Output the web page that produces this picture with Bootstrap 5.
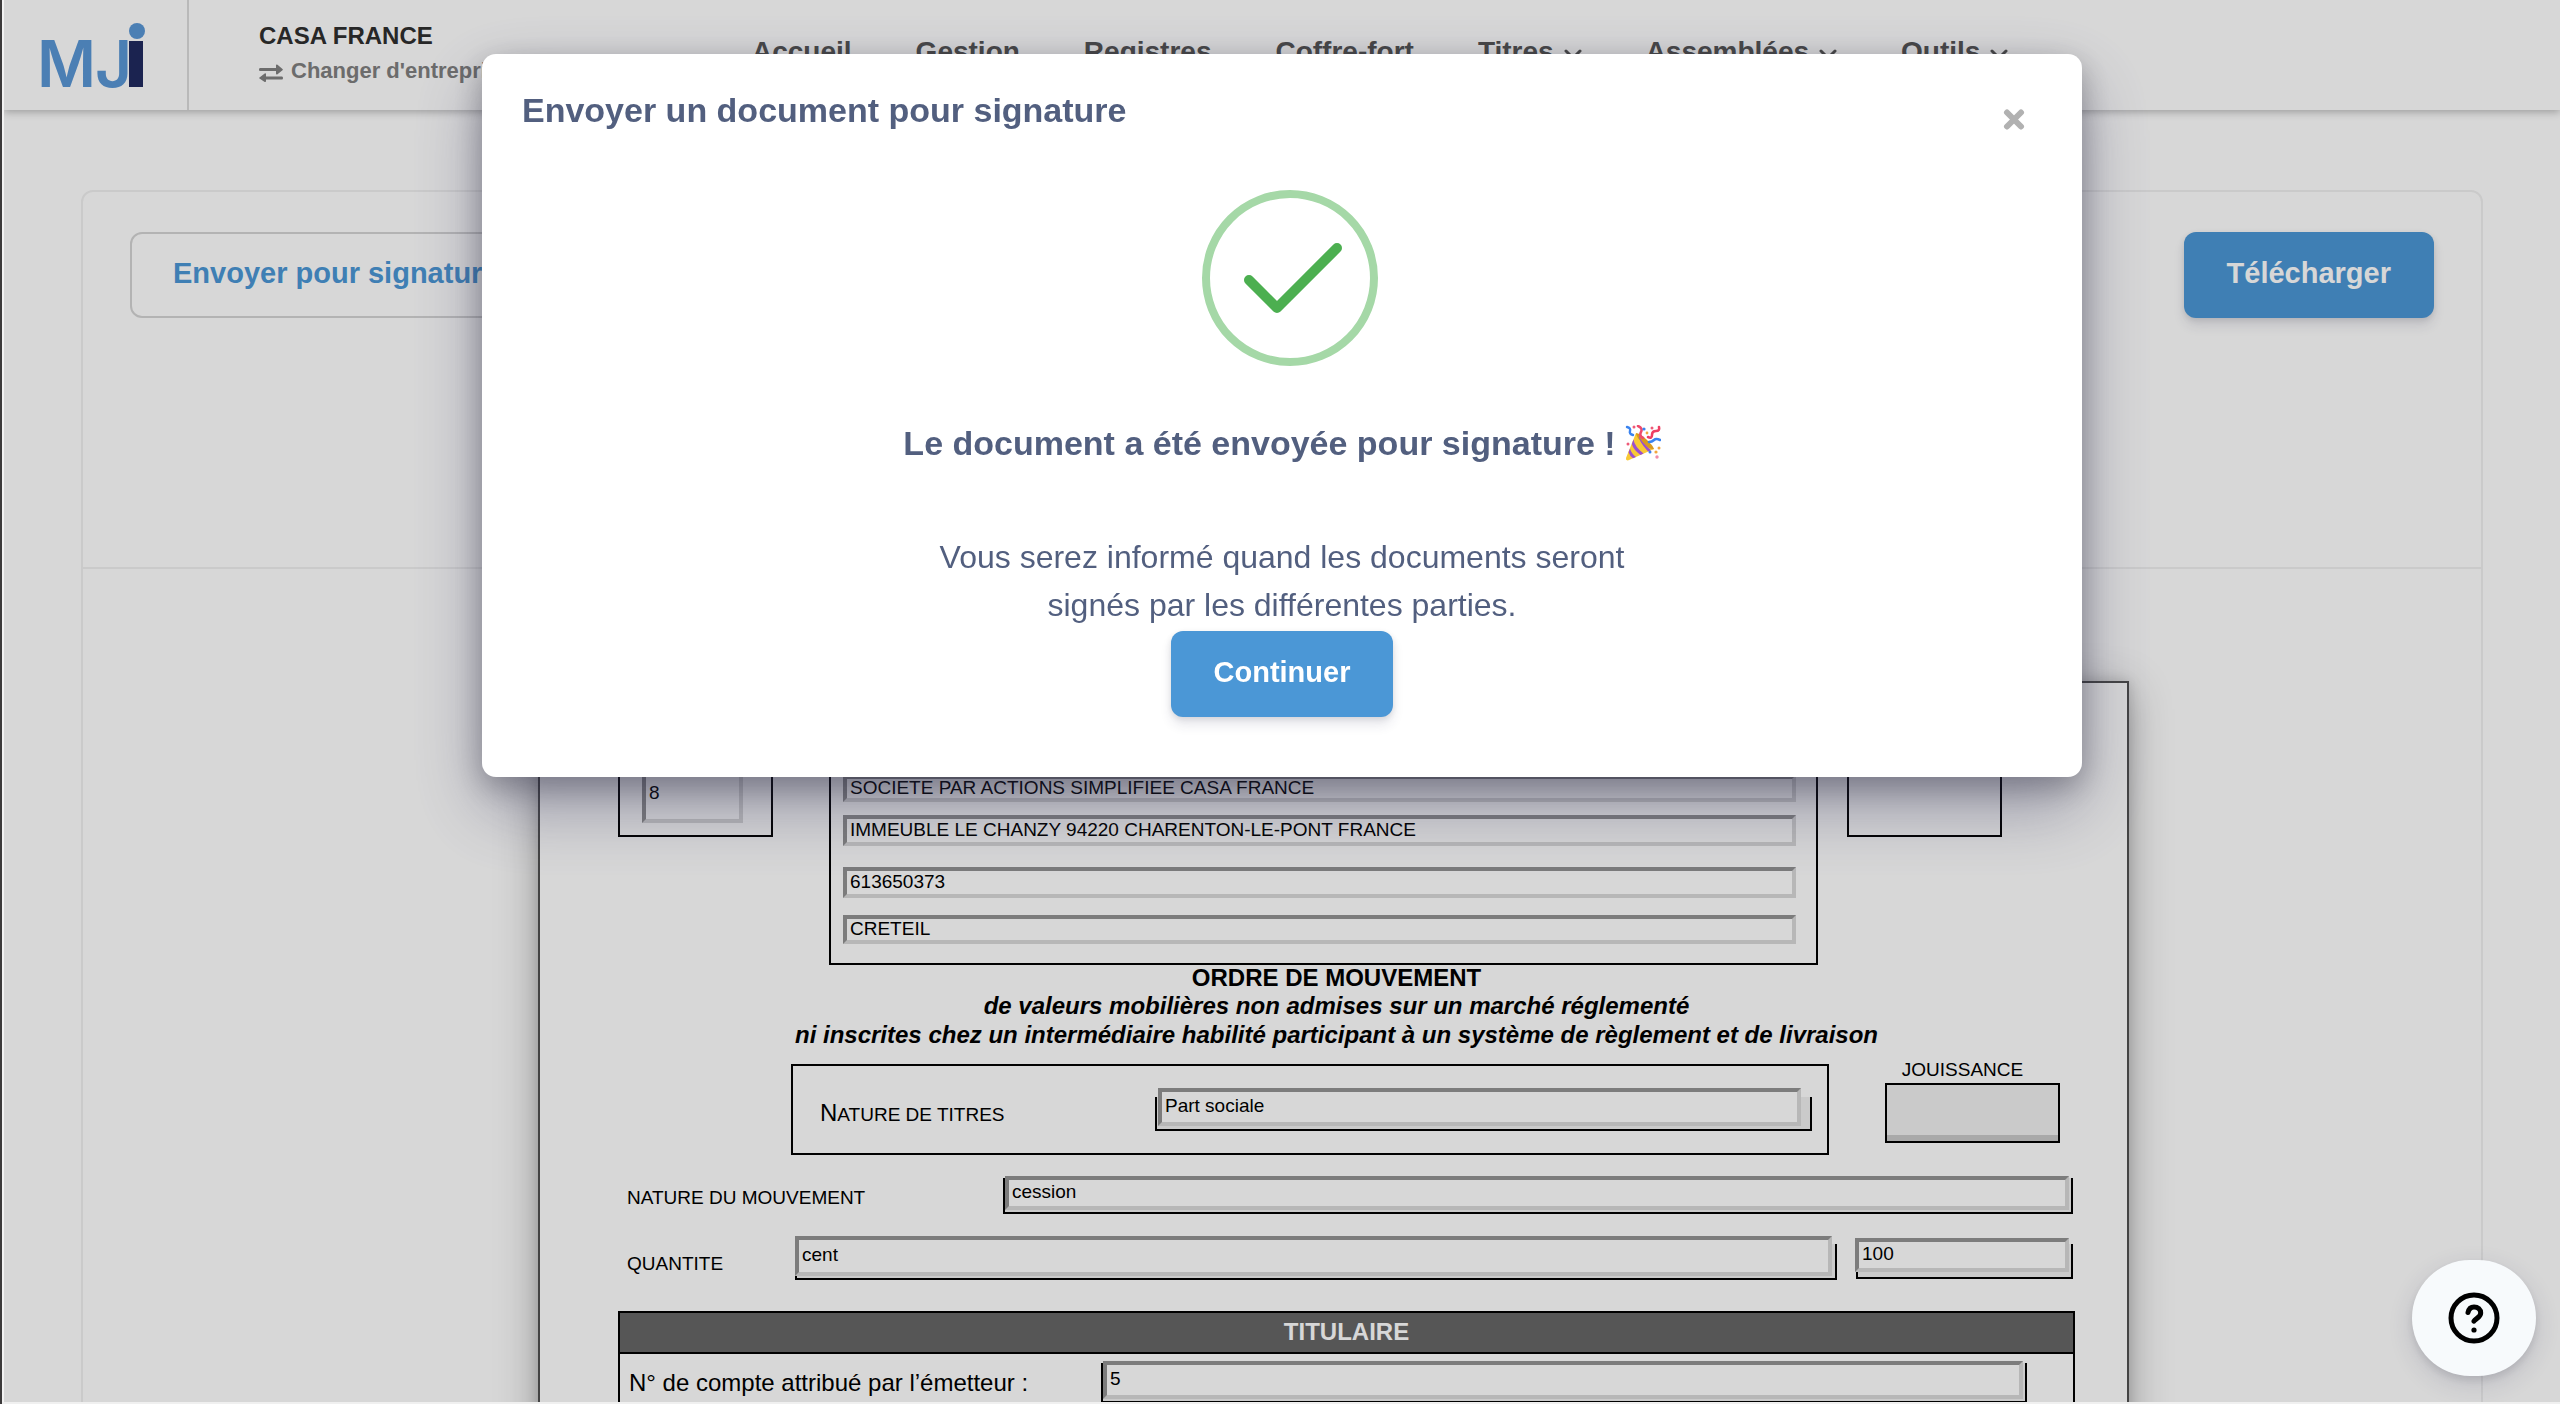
<!DOCTYPE html>
<html lang="fr">
<head>
<meta charset="utf-8">
<meta name="viewport" content="width=device-width, initial-scale=1">
<title>MJi – Signature</title>
<link rel="stylesheet" href="https://cdn.jsdelivr.net/npm/bootstrap@5.3.0/dist/css/bootstrap.min.css">
<style>
  body { font-family: "Liberation Sans", Arial, sans-serif; color: #000; height: 100vh; overflow: hidden; padding-left: 4px; background: #fff; }
  a { text-decoration: none; }

  /* window frame */
  .frame-left { position: fixed; left: 0; top: 0; bottom: 0; width: 4px; z-index: 2000; background: linear-gradient(90deg, #3c3a3b 0 2px, #f2f2f2 2px 4px); }
  .frame-bottom { position: fixed; left: 2px; right: 0; bottom: 0; height: 2px; z-index: 2000; background: #f0f0f0; }

  /* header */
  .topbar { height: 110px; box-shadow: 0 2px 8px rgba(0,0,0,.28); }
  .brand-cell { width: 185px; border-right: 2px solid #dcdcdc; padding-left: 26px; }
  .company { width: 563px; padding: 21px 0 0 70px; }
  .company-name { font-size: 24px; line-height: 30px; font-weight: 700; color: #2f2f2f; }
  .company-switch { font-size: 22px; line-height: 28px; font-weight: 700; color: #808080; margin-top: 6px; gap: 8px; }
  .company-switch svg { margin-top: 4px; }
  .main-nav { gap: 64px; padding-bottom: 6px; }
  .main-nav a { font-size: 28px; font-weight: 700; color: #555; display: flex; align-items: center; gap: 10px; }
  .main-nav svg { margin-top: 6px; }

  /* document panel */
  .content-area { height: calc(100vh - 110px); padding: 80px 77px 0; overflow: hidden; }
  .panel { border: 2px solid #f0f0f0; border-radius: 12px; min-height: 1300px; }
  .panel-tools { height: 377px; padding: 40px 47px 0; border-bottom: 2px solid #f0f0f0; }
  .btn-action { height: 86px; padding: 0 43px 2px; font-size: 29px; font-weight: 700; border-radius: 12px; border: 0; }
  .btn-fill, .btn-fill:hover { background: #4b97d6; color: #fff; box-shadow: 0 8px 12px rgba(50,50,93,.11), 0 2px 6px rgba(0,0,0,.1); }
  .btn-line { background: #fff; color: #4b97d6; border: 2px solid #d5d5d5; padding-left: 41px; padding-right: 41px; }

  .sheet-wrap { padding: 112px 0 0 103px; }
  .sheet { width: 100%; max-width: 1591px; height: 900px; border: 2px solid #505050; padding: 37px 52px 0 78px; box-shadow: 0 8px 40px rgba(0,0,0,.3), 0 0 12px rgba(0,0,0,.15); background: #fff; }
  .ink-box { border: 2px solid #000; }
  .small-cell { width: 155px; height: 117px; }
  .first-cell { padding: 0 28px 12px 22px; margin-right: 56px; }
  .last-cell { margin-left: 29px; }
  .issuer { height: 245px; padding: 0 20px 19px 12px; width: 989px; }
  .fld { display: block; width: 100%; min-width: 0; border: 4px solid; border-color: #939393 #dadada #dadada #939393; background: #fff; padding: 0 3px 2px; font-size: 19px; line-height: 22px; color: #000; border-radius: 0; outline: 0; }
  .h-27 { height: 27px; } .h-29 { height: 29px; } .h-31 { height: 31px; } .h-34 { height: 34px; } .h-38 { height: 38px; } .h-58 { height: 58px; } .h-40 { height: 40px; }
  .gap-under { margin-bottom: 17px; } .gap-under-s { margin-bottom: 13px; } .gap-under-l { margin-bottom: 21px; }
  .backed { position: relative; z-index: 0; }
  .backed::before { content: ""; position: absolute; z-index: -1; inset: 8px -5px -4px 0; border: 2px solid #000; border-top: 0; background: #f0f0f0; }
  .backed-wide::before { inset: 9px -11px -5px -3px; }
  .backed-flat::before { inset: 2px -4px -4px -2px; }
  .backed-deep::before { inset: 6px -4px -7px 1px; }
  .sheet-title { font-size: 24px; line-height: 26px; font-weight: 700; margin: 0; padding-right: 20px; }
  .sheet-sub { font-size: 24px; line-height: 29px; font-weight: 700; font-style: italic; margin: 0; padding-right: 20px; }
  .lbl { font-size: 19px; line-height: 22px; flex: none; }
  .nature-row { margin-top: 9px; }
  .nature { margin-left: 173px; margin-top: 6px; width: 1038px; height: 91px; padding: 22px 26px 0 27px; }
  .nature .lbl { width: 338px; line-height: 28px; margin-top: 11px; }
  .nature .initial { font-size: 24px; }
  .jouissance { width: 175px; margin-left: 56px; }
  .jouissance label { display: block; line-height: 24px; font-size: 19px; text-align: center; padding-right: 20px; margin-bottom: 1px; }
  .jouissance input { display: block; width: 100%; height: 60px; border: 2px solid #000; background: #f0f0f0; box-shadow: inset 0 -6px 0 #c9c9c9; padding: 0 6px; }
  .row-line { padding: 0 6px 0 9px; }
  .mv-label { width: 378px; padding-top: 32px; }
  .mv-field { margin-top: 21px; }
  .qty-line { margin-top: 26px; }
  .qty-label { width: 168px; padding-top: 17px; }
  .qty-number { width: 214px; margin: 2px 0 0 23px; }
  .holder { border: 2px solid #000; margin-top: 35px; height: 400px; }
  .holder-head { height: 41px; line-height: 38px; background: #666; border-bottom: 2px solid #000; color: #fff; font-size: 24px; font-weight: 700; text-align: center; margin: 0; }
  .holder-row { padding: 7px 50px 0 9px; }
  .holder-row label { width: 474px; flex: none; font-size: 24px; line-height: 28px; padding-top: 8px; }

  /* dialog */
  .veil { position: fixed; inset: 0; background: rgba(0,0,0,.157); z-index: 1000; padding: 54px 0 0 4px; }
  .dialog { width: 100%; max-width: 1600px; background: #fff; border-radius: 14px; padding-bottom: 60px; color: #525f7f; box-shadow: 0 30px 70px rgba(50,50,93,.4), 0 10px 30px rgba(0,0,0,.28); }
  .dialog-head { padding: 36px 57px 0 40px; }
  .dialog-head h1 { font-size: 34px; line-height: 40px; font-weight: 700; margin: 0; }
  .close-x { border: 0; background: none; padding: 0; line-height: 0; margin-top: 19px; }
  .tick { margin-top: 60px; }
  .dialog h2 { font-size: 34px; line-height: 40px; font-weight: 700; margin: 57px 0 0; display: flex; align-items: center; gap: 9px; }
  .dialog p { font-size: 32px; line-height: 48px; margin: 70px 0 2px; }

  .help { position: fixed; right: 24px; bottom: 28px; width: 124px; height: 116px; border: 0; border-radius: 62px; background: #f7fafc; z-index: 1500; box-shadow: 0 8px 24px rgba(50,50,93,.16), 0 4px 8px rgba(0,0,0,.1); }
</style>
<script src="https://cdn.jsdelivr.net/npm/bootstrap@5.3.0/dist/js/bootstrap.bundle.min.js"></script>
</head>
<body>
<header class="topbar d-flex">
  <a href="#" class="brand-cell d-flex align-items-center" aria-label="MJi">
    <svg width="124" height="98" viewBox="0 -12 124 98">
      <g font-family="Inter, sans-serif" font-weight="600" font-size="64" fill="#5a97d6">
        <text x="7" y="69">M</text><text x="65" y="69">J</text>
      </g>
      <rect x="99" y="23" width="14" height="46" fill="#212a5f"/>
      <circle cx="107" cy="13" r="8" fill="#5a97d6"/>
    </svg>
  </a>
  <div class="company flex-shrink-0">
    <div class="company-name">CASA FRANCE</div>
    <a href="#" class="company-switch d-flex align-items-center">
      <svg width="24" height="18" viewBox="0 0 24 18" fill="#808080"><path d="M1 4h16V1.500q0-1.500 1.500-.8l5 4.300q.7.600 0 1.200l-5 4q-1.500.6-1.500-.8V7H1Q0 7 0 5.500 0 4 1 4zM23 12.500H7V10q0-1-1.300-.6l-5.200 4q-.7.600 0 1.200l5.200 3.300q1.300.4 1.300-.8v-1.600h16q1 0 1-1.500t-1-1.500z"/></svg>
      <span>Changer d'entreprise</span>
    </a>
  </div>
  <nav class="main-nav d-flex align-items-center">
    <a href="#">Accueil</a>
    <a href="#">Gestion</a>
    <a href="#">Registres</a>
    <a href="#">Coffre-fort</a>
    <a href="#">Titres <svg width="18" height="12" viewBox="0 0 18 12" fill="none" stroke="#555" stroke-width="3" stroke-linecap="round"><path d="M2 2l7 7 7-7"/></svg></a>
    <a href="#">Assemblées <svg width="18" height="12" viewBox="0 0 18 12" fill="none" stroke="#555" stroke-width="3" stroke-linecap="round"><path d="M2 2l7 7 7-7"/></svg></a>
    <a href="#">Outils <svg width="18" height="12" viewBox="0 0 18 12" fill="none" stroke="#555" stroke-width="3" stroke-linecap="round"><path d="M2 2l7 7 7-7"/></svg></a>
  </nav>
</header>

<main class="content-area">
  <section class="panel">
    <div class="panel-tools d-flex justify-content-between align-items-start">
      <button type="button" class="btn btn-action btn-line">Envoyer pour signature</button>
      <button type="button" class="btn btn-action btn-fill">Télécharger</button>
    </div>
    <div class="sheet-wrap d-flex justify-content-center">
      <form class="sheet">
        <div class="d-flex align-items-start">
          <div class="ink-box small-cell first-cell d-flex align-items-end flex-shrink-0">
            <input class="fld h-58" type="text" value="8" aria-label="Code">
          </div>
          <div class="ink-box issuer d-flex flex-column justify-content-end">
            <input class="fld h-27 gap-under-s" type="text" value="SOCIETE PAR ACTIONS SIMPLIFIEE CASA FRANCE" aria-label="Société">
            <input class="fld h-31 gap-under-l" type="text" value="IMMEUBLE LE CHANZY 94220 CHARENTON-LE-PONT FRANCE" aria-label="Adresse">
            <input class="fld h-31 gap-under" type="text" value="613650373" aria-label="SIREN">
            <input class="fld h-29" type="text" value="CRETEIL" aria-label="Greffe">
          </div>
          <div class="ink-box small-cell last-cell flex-shrink-0"></div>
        </div>

        <h2 class="sheet-title text-center">ORDRE DE MOUVEMENT</h2>
        <p class="sheet-sub text-center">de valeurs mobilières non admises sur un marché réglementé<br>ni inscrites chez un intermédiaire habilité participant à un système de règlement et de livraison</p>

        <div class="nature-row d-flex align-items-start">
          <div class="ink-box nature d-flex align-items-start">
            <label class="lbl" for="f-nature"><span class="initial">N</span>ATURE DE TITRES</label>
            <div class="backed backed-wide flex-grow-1"><input id="f-nature" class="fld h-38" type="text" value="Part sociale"></div>
          </div>
          <div class="jouissance">
            <label for="f-jouissance">JOUISSANCE</label>
            <input id="f-jouissance" type="text">
          </div>
        </div>

        <div class="row-line d-flex">
          <label class="lbl mv-label" for="f-mvt">NATURE DU MOUVEMENT</label>
          <div class="backed backed-flat flex-grow-1 mv-field"><input id="f-mvt" class="fld h-34" type="text" value="cession"></div>
        </div>

        <div class="row-line qty-line d-flex align-items-start">
          <label class="lbl qty-label" for="f-qty">QUANTITE</label>
          <div class="backed flex-grow-1"><input id="f-qty" class="fld h-40" type="text" value="cent"></div>
          <div class="backed backed-deep qty-number"><input class="fld h-34" type="text" value="100" aria-label="Quantité en chiffres"></div>
        </div>

        <section class="holder">
          <h3 class="holder-head">TITULAIRE</h3>
          <div class="holder-row d-flex align-items-start">
            <label for="f-compte">N° de compte attribué par l’émetteur :</label>
            <div class="backed backed-flat flex-grow-1"><input id="f-compte" class="fld h-38" type="text" value="5"></div>
          </div>
        </section>
      </form>
    </div>
  </section>
</main>

<div class="veil">
  <section class="dialog mx-auto" role="dialog" aria-labelledby="dlg-title">
    <div class="dialog-head d-flex justify-content-between align-items-start">
      <h1 id="dlg-title">Envoyer un document pour signature</h1>
      <button type="button" class="close-x" aria-label="Fermer"><svg width="22" height="21" viewBox="0 0 22 21" stroke="#b1b1b1" stroke-width="6" stroke-linecap="round"><path d="M4 3.500l14 14M18 3.500l-14 14"/></svg></button>
    </div>
    <div class="d-flex flex-column align-items-center text-center">
      <svg class="tick" width="192" height="176" viewBox="0 0 192 176" fill="none">
        <circle cx="104" cy="88" r="84" stroke="#a5d8a7" stroke-width="8"/>
        <path d="M63 90l28 28 60-60" stroke="#4caf50" stroke-width="10" stroke-linecap="round" stroke-linejoin="round"/>
      </svg>
      <h2>Le document a été envoyée pour signature !
        <svg width="36" height="36" viewBox="0 0 36 36">
          <path d="M11 8L1 33q-.6 3 2.500 2.300L29 24z" fill="#f9c935"/>
          <path d="M11 8q4 .5 10.500 6.500T29 24q-4 1-11-5.500T11 8z" fill="#d99a1e"/>
          <path d="M8.500 14.500q1 7 10 14l-3 1.400q-7-5-8.700-10.900zM5 23.500q1.500 5.500 6 8.500l-3 1.300q-3.300-2.500-4.500-6zM14 10.500q-1 5 9 16l3-1.300Q15 16 14 10.500z" fill="#9a4fd0"/>
          <path d="M2 2q4 1 3 4t3 4" fill="none" stroke="#3a83ef" stroke-width="2.400" stroke-linecap="round"/>
          <path d="M13 1q5 2 3 6t2 6" fill="none" stroke="#ef4a6c" stroke-width="2.600" stroke-linecap="round"/>
          <path d="M34 2q1 4-3 4t-4 4-4 2" fill="none" stroke="#ee3f63" stroke-width="2.600" stroke-linecap="round"/>
          <path d="M35 15q-4-2-6 0t-5 2" fill="none" stroke="#3a83ef" stroke-width="2.600" stroke-linecap="round"/>
          <circle cx="9" cy="2" r="1.500" fill="#ee5a78"/><circle cx="19" cy="4" r="1.600" fill="#3a83ef"/><circle cx="27" cy="3" r="1.500" fill="#ee5a78"/>
          <circle cx="3" cy="19" r="1.500" fill="#ee5a78"/><circle cx="25" cy="27" r="1.500" fill="#3a83ef"/><circle cx="31" cy="27" r="1.600" fill="#f2a73c"/>
          <circle cx="32" cy="32" r="1.700" fill="#f08ca8"/><circle cx="34" cy="23" r="1.500" fill="#f2a73c"/><circle cx="22" cy="8" r="1.400" fill="#f2a73c"/>
        </svg>
      </h2>
      <p>Vous serez informé quand les documents seront<br>signés par les différentes parties.</p>
      <button type="button" class="btn btn-action btn-fill">Continuer</button>
    </div>
  </section>
</div>

<button type="button" class="help" aria-label="Aide">
  <svg width="52" height="52" viewBox="0 0 52 52" fill="none" stroke="#000" stroke-width="5" stroke-linecap="round" stroke-linejoin="round">
    <circle cx="26" cy="26" r="23"/>
    <path d="M20 20.500c.8-3.600 3.200-5.500 6-5.500 4 0 6.700 2.500 6.700 6 0 4.500-5.200 5.200-6.700 8.200"/>
    <circle cx="26" cy="38" r="2.600" fill="#000" stroke="none"/>
  </svg>
</button>
<div class="frame-left"></div>
<div class="frame-bottom"></div>
</body>
</html>
